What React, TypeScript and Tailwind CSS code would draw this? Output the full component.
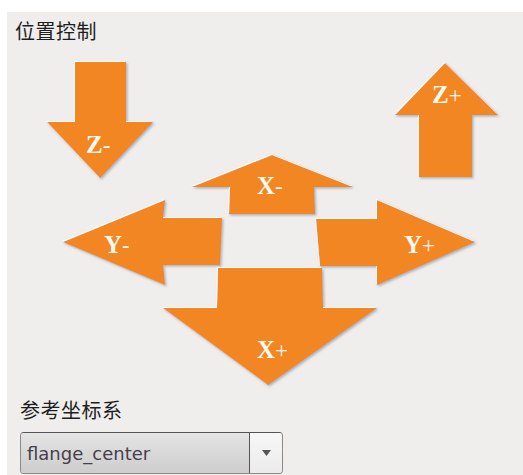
const ORANGE = '#f28620';

interface ArrowProps {
  points: string;
  label: string;
  sign: string;
  x: number;
  y: number;
}

function Arrow({ points, label, sign, x, y }: ArrowProps) {
  return (
    <g>
      <polygon points={points} fill={ORANGE} filter="url(#arrowShadow)" />
      <text
        x={x}
        y={y}
        fill="#fff8ee"
        fontFamily='"Liberation Serif", serif'
        fontSize="25"
        fontWeight="bold"
      >
        {label}
        <tspan fontWeight="normal" fontSize="23">
          {sign}
        </tspan>
      </text>
    </g>
  );
}

function ArrowPad() {
  return (
    <svg viewBox="7 45 516 345" width="516" height="345" className="block">
      <defs>
        <filter id="arrowShadow" x="-10%" y="-10%" width="120%" height="120%">
          <feDropShadow dx="-1" dy="-1" stdDeviation="0.4" floodColor="#ffffff" floodOpacity="0.9" />
          <feDropShadow dx="1.5" dy="1.5" stdDeviation="1" floodColor="#6f7f96" floodOpacity="0.55" />
        </filter>
      </defs>
      {/* Z- */}
      <Arrow points="75,62 126,62 126,122 153,122 100,178 47,122 75,122" label="Z" sign="-" x={86} y={153} />
      {/* Z+ */}
      <Arrow points="445,63 498,115 472,115 472,177 419,177 419,115 395,115" label="Z" sign="+" x={432} y={103} />
      {/* X- */}
      <Arrow points="272,155 353,187 314,187 315,214 229,214 230,187 192,187" label="X" sign="-" x={257} y={194} />
      {/* Y- */}
      <Arrow points="63,242 165,200 163,218 222,218 220,265 163,265 165,285" label="Y" sign="-" x={104} y={253} />
      {/* Y+ */}
      <Arrow points="475,242 377,200 377,219 316,219 320,266 377,266 377,285" label="Y" sign="+" x={404} y={253} />
      {/* X+ */}
      <Arrow points="218,268 322,268 323,308 377,308 268,385 163,308 217,308" label="X" sign="+" x={257} y={358} />
    </svg>
  );
}

export default function App() {
  return (
    <div className="w-[523px] h-[475px] overflow-hidden bg-white flex flex-col font-['Liberation_Sans','Noto_Sans_CJK_SC',sans-serif]">
      <div className="h-[12px] shrink-0 bg-white" />
      <div className="flex-1 ml-[7px] bg-[#efeeec] flex flex-col">
        <div className="pl-[8px] pt-[10px] text-[20px] leading-[20px] tracking-[0.5px] text-[#1e1e1e]">位置控制</div>
        <div className="mt-[3px]">
          <ArrowPad />
        </div>
        <div className="pl-[13px] mt-[11px] text-[20px] leading-[20px] tracking-[0.5px] text-[#1e1e1e]">参考坐标系</div>
        <div className="ml-[13px] mt-[11px] w-[263px] h-[42px] flex rounded-[4px] border border-[#8a8a8a] border-t-[#555] overflow-hidden">
          <div className="flex-1 flex items-center pl-[6px] bg-gradient-to-b from-[#e4e4e4] to-[#cdcdcd] text-[18px] text-[#45404a] font-['DejaVu_Sans',sans-serif]">
            flange_center
          </div>
          <div className="w-[33px] flex items-center justify-center bg-gradient-to-b from-[#f7f7f7] to-[#ebebeb] border-l border-[#555]">
            <svg width="9" height="6" viewBox="0 0 9 6">
              <polygon points="0,0 9,0 4.5,6" fill="#555" />
            </svg>
          </div>
        </div>
      </div>
    </div>
  );
}
